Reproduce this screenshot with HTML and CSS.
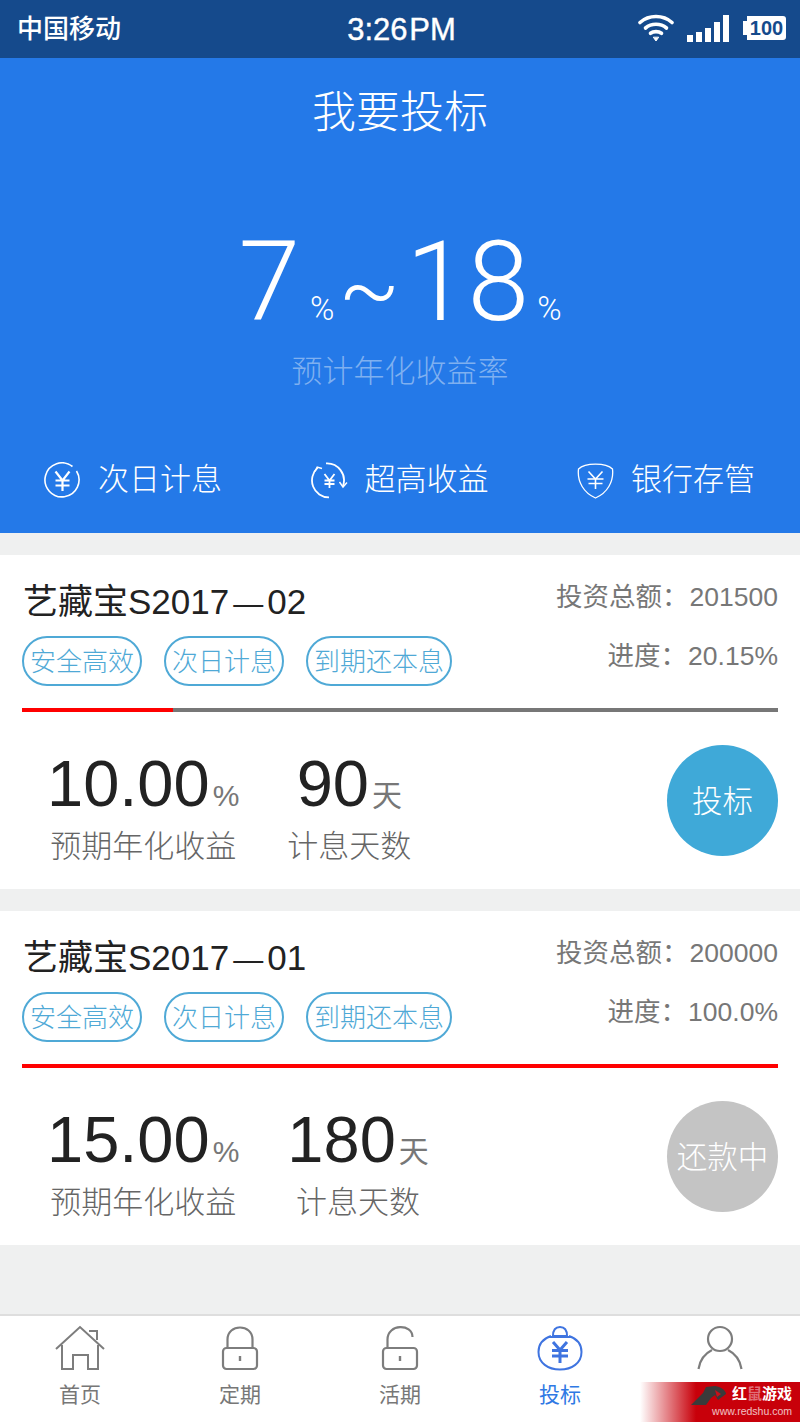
FILE: index.html
```html
<!DOCTYPE html>
<html lang="zh-CN">
<head>
<meta charset="utf-8"/>
<meta content="width=device-width, initial-scale=1.0" name="viewport"/>
<title>我要投标</title>
<link rel="stylesheet" href="styles.css">
</head>
<body>
<div class="status-bar">
  <span class="carrier">中国移动</span>
  <span class="clock">3:26 PM</span>
  <div class="status-icons">
    <svg class="wifi" width="36" height="28" viewBox="0 0 36 28" fill="none" stroke="#fff" stroke-width="3.6" stroke-linecap="round">
      <path d="M2 8.5C11 0.5 25 0.5 34 8.5"/>
      <path d="M7.5 14C13.5 9 22.5 9 28.5 14"/>
      <path d="M12.5 19.3C15.5 17 20.5 17 23.5 19.3"/>
      <path d="M15.5 23.5L18 27L20.5 23.5Z" fill="#fff" stroke-width="1"/>
    </svg>
    <div class="signal">
      <i class="bar-1"></i><i class="bar-2"></i><i class="bar-3"></i><i class="bar-4"></i><i class="bar-5"></i>
    </div>
    <div class="battery"><span>100</span></div>
  </div>
</div>

<section class="hero">
  <h1 class="hero-title">我要投标</h1>
  <div class="rate">
    <span class="rate-num">7</span><span class="rate-unit">%</span><span class="rate-tilde">~</span><span class="rate-num">18</span><span class="rate-unit last">%</span>
  </div>
  <p class="rate-caption">预计年化收益率</p>
  <div class="features">
    <div class="feature">
      <svg width="37" height="37" viewBox="0 0 37 37" fill="none" stroke="#fff" stroke-width="1.6">
        <path d="M28.5 4.5A17 17 0 1 0 32.5 9"/>
        <path d="M11.5 9.5L18.5 18.5L25.5 9.5M18.5 18.5V29M11.5 18.5H25.5M11.5 23.5H25.5" stroke-width="2.2"/>
      </svg>
      <span>次日计息</span>
    </div>
    <div class="feature">
      <svg width="37" height="37" viewBox="0 0 37 37" fill="none" stroke="#fff" stroke-width="1.8">
        <path d="M15 1.4A17 17 0 0 1 32 24"/>
        <path d="M6.7 5.7A17 17 0 0 0 18 35.4"/>
        <path d="M28.5 20L32 25L36 20.5" stroke-width="1.4"/>
        <path d="M4 9.5L6.2 5L11 6.5" stroke-width="1.4"/>
        <path d="M13.5 12L18.5 18.5L23.5 12M18.5 18.5V26M13.5 18.5H23.5M13.5 22H23.5" stroke-width="1.8"/>
      </svg>
      <span>超高收益</span>
    </div>
    <div class="feature">
      <svg width="37" height="37" viewBox="0 0 37 37" fill="none" stroke="#fff" stroke-width="1.3">
        <path d="M1.5 7C8 0.5 29 0.5 35.5 7C37 20 30 31 18.5 36C7 31 0 20 1.5 7Z"/>
        <path d="M11.5 9.5L18.5 17L25.5 9.5M18.5 17V27M10.5 17H26.5M11.5 21.5H25.5" stroke-width="1.6"/>
      </svg>
      <span>银行存管</span>
    </div>
  </div>
</section>

<section class="card">
  <div class="card-head">
    <div class="card-info">
      <h2 class="card-title">艺藏宝S2017<span class="dash">—</span>02</h2>
      <div class="tags">
        <span class="tag">安全高效</span><span class="tag">次日计息</span><span class="tag">到期还本息</span>
      </div>
    </div>
    <div class="card-stats">
      <p>投资总额：<span class="val">201500</span></p>
      <p>进度：<span class="val">20.15%</span></p>
    </div>
  </div>
  <div class="progress"><div class="progress-fill" style="width:20%"></div></div>
  <div class="card-foot">
    <div class="figure">
      <div class="figure-num">10.00<small>%</small></div>
      <div class="figure-label">预期年化收益</div>
    </div>
    <div class="figure">
      <div class="figure-num">90<small>天</small></div>
      <div class="figure-label">计息天数</div>
    </div>
    <button class="bid-btn" type="button">投标</button>
  </div>
</section>

<section class="card">
  <div class="card-head">
    <div class="card-info">
      <h2 class="card-title">艺藏宝S2017<span class="dash">—</span>01</h2>
      <div class="tags">
        <span class="tag">安全高效</span><span class="tag">次日计息</span><span class="tag">到期还本息</span>
      </div>
    </div>
    <div class="card-stats">
      <p>投资总额：<span class="val">200000</span></p>
      <p>进度：<span class="val">100.0%</span></p>
    </div>
  </div>
  <div class="progress"><div class="progress-fill" style="width:100%"></div></div>
  <div class="card-foot">
    <div class="figure">
      <div class="figure-num">15.00<small>%</small></div>
      <div class="figure-label">预期年化收益</div>
    </div>
    <div class="figure">
      <div class="figure-num">180<small>天</small></div>
      <div class="figure-label">计息天数</div>
    </div>
    <button class="bid-btn done" type="button">还款中</button>
  </div>
</section>

<nav class="tabbar">
  <a class="tab">
    <svg width="50" height="46" viewBox="0 0 50 46" fill="none" stroke="#7d7d7d" stroke-width="2">
      <path d="M1 24L25 2L49 24"/>
      <path d="M34 6H42V15"/>
      <path d="M7 20V44H18V30H33V44H43V20"/>
    </svg>
    <span>首页</span>
  </a>
  <a class="tab">
    <svg width="38" height="46" viewBox="0 0 38 46" fill="none" stroke="#7d7d7d" stroke-width="2.2">
      <path d="M6.5 23V14.5C6.5 -1.5 31.5 -1.5 31.5 14.5V23"/>
      <rect x="2" y="23" width="34" height="21" rx="3.5"/>
      <path d="M19 31V36" stroke-width="2.4"/>
    </svg>
    <span>定期</span>
  </a>
  <a class="tab">
    <svg width="38" height="46" viewBox="0 0 38 46" fill="none" stroke="#7d7d7d" stroke-width="2.2">
      <path d="M6.5 23V14.5C6.5 -1.5 31.5 -1.5 31.5 12"/>
      <rect x="2" y="23" width="34" height="21" rx="3.5"/>
      <path d="M19 31V36" stroke-width="2.4"/>
    </svg>
    <span>活期</span>
  </a>
  <a class="tab active">
    <svg width="46" height="46" viewBox="0 0 46 46" fill="none" stroke="#3f74e0" stroke-width="2">
      <path d="M14 11C5 14 1.5 20 1.5 27C1.5 38 11 44.5 23 44.5C35 44.5 44.5 38 44.5 27C44.5 20 41 14 32 11"/>
      <path d="M12 12H34M16 11C16 4.5 19 2 23 2C27 2 30 4.5 30 11Z"/>
      <path d="M16 17L23 25L30 17M23 25V38M15 25.5H31M15 31H31" stroke-width="3"/>
    </svg>
    <span>投标</span>
  </a>
  <a class="tab">
    <svg width="46" height="46" viewBox="0 0 46 46" fill="none" stroke="#7d7d7d" stroke-width="2.2">
      <circle cx="23" cy="14" r="12"/>
      <path d="M1.5 44C3 34 9 28 15 25M44.5 44C43 34 37 28 31 25"/>
    </svg>
  </a>
</nav>

<div class="watermark">
  <svg class="wm-logo" width="36" height="20" viewBox="0 0 36 20">
    <path d="M0 19L12 7L15 1L24 0C31 1 35 5 35 8L27 14L24 9L20 12L15 19Z" fill="#3a3a3a"/>
    <path d="M24 4L30 8L26 11Z" fill="#c8101a"/>
  </svg>
  <div class="wm-text">
    <div class="wm-name">红<span class="wm-dim">鼠</span>游戏</div>
    <div class="wm-url">www.redshu.com</div>
  </div>
</div>
</body>
</html>
```

FILE: styles.css
```css
/* 我要投标 page */
* {
    box-sizing: border-box;
}

body {
    margin: 0;
    position: relative;
    height: 1422px;
    overflow: hidden;
    font-family: "Liberation Sans", "Noto Sans CJK SC", sans-serif;
    background-color: #eff0f0;
    color: #222;
}

h1, h2, p {
    margin: 0;
    font-weight: normal;
}

/* status bar */
.status-bar {
    height: 58px;
    background-color: #154a8c;
    color: #fff;
    display: flex;
    align-items: center;
    justify-content: space-between;
    padding: 0 14px 2px 17px;
}

.carrier {
    font-size: 26px;
    font-weight: 500;
    width: 240px;
    padding-bottom: 4px;
}

.clock {
    font-size: 31px;
    word-spacing: -7px;
    padding-top: 4px;
    -webkit-text-stroke: 0.4px #fff;
}

.status-icons {
    width: 240px;
    display: flex;
    align-items: center;
    justify-content: flex-end;
}

.wifi {
    margin-right: 13px;
}

.signal {
    display: flex;
    align-items: flex-end;
    gap: 3px;
    height: 27px;
    margin-right: 18px;
}

.signal i {
    display: block;
    width: 6px;
    background-color: #fff;
}

.bar-1 { height: 7px; }
.bar-2 { height: 10px; }
.bar-3 { height: 14px; }
.bar-4 { height: 20px; }
.bar-5 { height: 27px; }

.battery {
    position: relative;
    width: 39px;
    height: 24px;
    background-color: #fff;
    border-radius: 0 3px 3px 0;
    color: #154a8c;
    font-size: 20px;
    font-weight: bold;
    line-height: 24px;
    text-align: center;
}

.battery:before {
    content: "";
    position: absolute;
    left: -4px;
    top: 5px;
    width: 4px;
    height: 14px;
    background-color: #fff;
}

/* blue header */
.hero {
    height: 475px;
    background-color: #2479e8;
    color: #fff;
    text-align: center;
    padding-top: 28px;
}

.hero-title {
    font-size: 44px;
    font-weight: 300;
    line-height: 54px;
}

.rate {
    margin-top: 76px;
    height: 132px;
    font-family: Roboto, "Liberation Sans", sans-serif;
    font-weight: 300;
    display: flex;
    justify-content: center;
    align-items: baseline;
    line-height: 132px;
}

.rate-num {
    font-size: 111px;
}

.rate-tilde {
    font-size: 90px;
    margin: 0 6px 0 4px;
}

.rate-unit {
    font-size: 33px;
    margin-left: 10px;
}

.rate-unit.last {
    margin-left: 8px;
}

.rate-caption {
    margin-top: 4px;
    font-size: 31px;
    font-weight: 300;
    line-height: 40px;
    color: #7fb0f0;
}

.features {
    display: flex;
    justify-content: space-between;
    padding: 0 45px 0 44px;
    margin-top: 69px;
}

.feature {
    display: flex;
    align-items: center;
    gap: 17px;
    font-size: 31px;
    font-weight: 300;
    line-height: 38px;
}

/* product cards */
.card {
    height: 334px;
    margin-top: 22px;
    background-color: #fff;
    padding: 0 22px;
}

.card-head {
    height: 153px;
    display: flex;
    justify-content: space-between;
}

.card-info {
    padding-top: 25px;
}

.card-title {
    font-size: 35px;
    line-height: 44px;
    padding-left: 1px;
    color: #222;
}

.dash {
    padding: 0 4px;
    font-size: 30px;
}

.tags {
    display: flex;
    gap: 22px;
    margin-top: 10px;
}

.tag {
    height: 50px;
    padding: 0 6px;
    border: 2px solid #4fa9d6;
    border-radius: 25px;
    color: #4fa9d6;
    font-size: 26px;
    font-weight: 300;
    line-height: 48px;
}

.card-stats {
    padding-top: 22px;
    text-align: right;
    font-size: 26.5px;
    line-height: 40px;
    color: #777;
}

.card-stats p {
    margin-bottom: 19px;
}

.val {
    margin-left: 1px;
}

.progress {
    height: 4px;
    background-color: #777;
}

.progress-fill {
    height: 100%;
    background-color: #f00;
}

.card-foot {
    display: flex;
    align-items: flex-start;
    gap: 48px;
    padding: 33px 0 0 25px;
}

.figure {
    padding-top: 7px;
    text-align: center;
}

.figure-num {
    font-size: 65px;
    line-height: 63px;
    color: #222;
}

.figure-num small {
    margin-left: 3px;
    font-size: 30px;
    color: #777;
}

.figure-label {
    font-size: 31px;
    font-weight: 300;
    line-height: 40px;
    color: #666;
}

.bid-btn {
    width: 111px;
    height: 111px;
    margin-left: auto;
    padding: 0 0 3px;
    border: 0;
    border-radius: 50%;
    background-color: #3fa9d8;
    color: #fff;
    font-family: inherit;
    font-size: 30.5px;
    font-weight: 300;
}

.bid-btn.done {
    background-color: #c4c4c4;
}

/* bottom tabs */
.tabbar {
    position: absolute;
    left: 0;
    right: 0;
    bottom: 0;
    height: 108px;
    background-color: #fff;
    border-top: 2px solid #dedede;
    display: flex;
}

.tab {
    flex: 1;
    display: flex;
    flex-direction: column;
    align-items: center;
    padding-top: 9px;
    font-size: 21px;
    line-height: 30px;
    color: #777;
}

.tab span {
    margin-top: 9px;
}

.tab.active {
    color: #2f79e4;
}

/* watermark over the corner */
.watermark {
    position: absolute;
    right: 0;
    bottom: 0;
    width: 160px;
    height: 40px;
    background: linear-gradient(to right, rgba(200, 0, 10, 0), #c8000a 35%, #c8000a 100%);
    display: flex;
    justify-content: flex-end;
    gap: 5px;
    padding-right: 8px;
    color: #fff;
}

.wm-logo {
    margin-top: 4px;
}

.wm-name {
    font-size: 15px;
    font-weight: bold;
    line-height: 23px;
    text-align: right;
    white-space: nowrap;
}

.wm-dim {
    color: #e07078;
}

.wm-url {
    margin-left: -40px;
    font-size: 10.5px;
    line-height: 13px;
    opacity: 0.75;
    text-align: right;
    white-space: nowrap;
}
```
